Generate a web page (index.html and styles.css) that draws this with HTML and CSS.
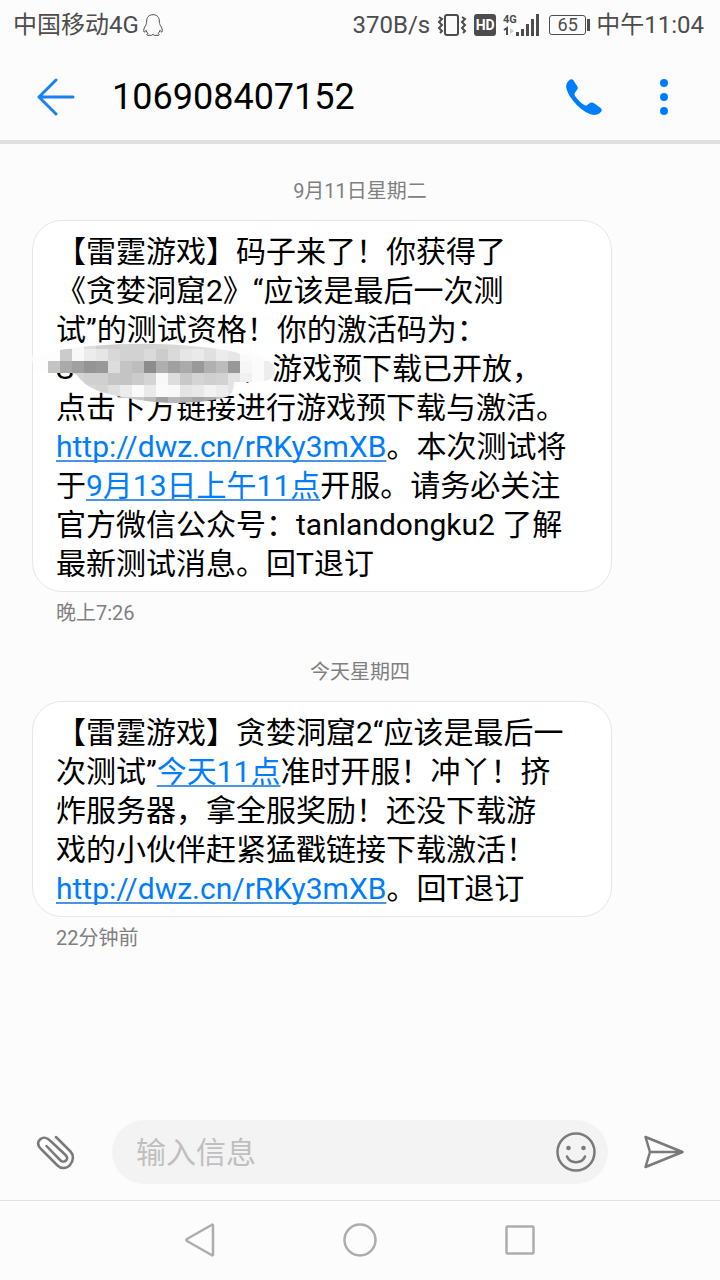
FILE: index.html
```html
<!DOCTYPE html>
<html lang="zh-CN">
<head>
    <meta charset="UTF-8">
    <meta name="viewport" content="width=device-width, initial-scale=1.0">
    <title>106908407152</title>
    <link rel="stylesheet" href="styles.css">
</head>
<body>
    <!-- Status bar -->
    <div class="status-bar">
        <span>中国移动4G</span>
        <svg class="qq" width="20" height="22" viewBox="0 0 60 66" fill="none" stroke="#4d4d4d" stroke-width="3">
            <path d="M30 2C17 2 11 11 11 21C11 27 10 30 8 34C3 41 1 49 3 54C5 55 8 51 9 49C10 53 12 56 15 58C11 60 10 64 14 64H26L30 61L34 64H46C50 64 49 60 45 58C48 56 50 53 51 49C52 51 55 55 57 54C59 49 57 41 52 34C50 30 49 27 49 21C49 11 43 2 30 2Z"/>
        </svg>
        <span class="speed">370B/s</span>
        <svg class="vibrate" width="30" height="24" viewBox="0 0 30 24" fill="none" stroke="#4d4d4d" stroke-width="2">
            <rect x="8" y="2" width="13" height="20" rx="2"/>
            <path d="M2 4L5 6L2 9L5 12L2 15L5 18L3 20M25 4L28 6L25 9L28 12L25 15L28 18L26 20"/>
        </svg>
        <span class="hd">HD</span>
        <svg class="signal" width="36" height="24" viewBox="0 0 36 24">
            <text x="0" y="10" font-size="11" font-weight="700" fill="#4d4d4d">4G</text>
            <path d="M1 17L4 15V22" fill="none" stroke="#4d4d4d" stroke-width="2"/>
            <path d="M7 15L11 18L7 21Z" fill="#ccc"/>
            <path d="M13 19h3v4h-3zM18 16h3v7h-3zM23 11h3v12h-3zM28 6h3v17h-3zM33 1h3v22h-3z" fill="#4d4d4d"/>
        </svg>
        <span class="battery">65</span>
        <span>中午11:04</span>
    </div>

    <!-- Conversation header -->
    <header class="header">
        <button class="icon-button" type="button" aria-label="返回">
            <svg width="38" height="38" viewBox="0 0 38 38" fill="none" stroke="#1a80f5" stroke-width="3" stroke-linecap="round" stroke-linejoin="round">
                <path d="M19 2L2 19L19 36M2 19H36"/>
            </svg>
        </button>
        <h1 class="number">106908407152</h1>
        <button class="icon-button" type="button" aria-label="拨打电话">
            <svg width="36" height="36" viewBox="0 0 109 109" fill="#007dff">
                <path d="M8 5Q16 -2 22 3L34 22Q38 28 33 33L27 42Q24 47 28 52Q42 72 58 80Q62 82 66 77L74 72Q80 70 86 74L105 88Q111 93 106 99Q98 109 84 109Q60 106 32 78Q2 46 0 22Q0 12 8 5Z"/>
            </svg>
        </button>
        <button class="icon-button more" type="button" aria-label="更多">
            <svg width="8" height="36" viewBox="0 0 8 36" fill="#007dff">
                <circle cx="4" cy="4" r="4"/>
                <circle cx="4" cy="18" r="4"/>
                <circle cx="4" cy="32" r="4"/>
            </svg>
        </button>
    </header>

    <!-- Messages -->
    <main class="messages">
        <p class="date">9月11日星期二</p>
        <div class="bubble">
            【雷霆游戏】码子来了！你获得了<br>
            《贪婪洞窟2》“应该是最后一次测<br>
            试”的测试资格！你的激活码为：<br>
            <span class="code">S<svg class="mosaic" width="244" height="60" viewBox="32 342 244 60">
                <defs>
                    <clipPath id="brush">
                        <path d="M48 360H60V349Q76 346 90 345Q150 340 200 346Q232 349 240 353L262 356Q274 362 275 368Q275 377 268 379Q262 381 252 381H234Q234 391 229 395Q210 402 170 402Q130 400 98 390Q82 383 77 374L72 372H48Z"/>
                    </clipPath>
                </defs>
                <path d="M32 356Q60 347 96 345H240L274 360L275 376L232 384L90 380L72 372L34 370Z" fill="#fdfdfd"/>
                <g id="cells" clip-path="url(#brush)"></g>
            </svg></span>，游戏预下载已开放，<br>
            点击下方链接进行游戏预下载与激活。<br>
            <a href="#">http://dwz.cn/rRKy3mXB</a>。本次测试将<br>
            于<a href="#">9月13日上午11点</a>开服。请务必关注<br>
            官方微信公众号：tanlandongku2 了解<br>
            最新测试消息。回T退订
        </div>
        <p class="time">晚上7:26</p>

        <p class="date">今天星期四</p>
        <div class="bubble">
            【雷霆游戏】贪婪洞窟2“应该是最后一<br>
            次测试”<a href="#">今天11点</a>准时开服！冲丫！挤<br>
            炸服务器，拿全服奖励！还没下载游<br>
            戏的小伙伴赶紧猛戳链接下载激活！<br>
            <a href="#">http://dwz.cn/rRKy3mXB</a>。回T退订
        </div>
        <p class="time">22分钟前</p>
    </main>

    <!-- Message input -->
    <form class="composer">
        <button class="icon-button" type="button" aria-label="附件">
            <svg width="40" height="36" viewBox="0 0 40 36" fill="none" stroke="#7a7a7a" stroke-width="2.5" stroke-linecap="round">
                <path d="M20 3L34.5 17.5C38 21 37.5 27 34 31S25 35 21.5 31.5L5 15C1.5 11.5 1.5 8 4 5.5S10.5 3 14 6.5L29.5 21C31.5 23 31.5 25 30 26.5S26 28 24 26L10.5 12"/>
            </svg>
        </button>
        <div class="field">
            <input class="field-input" type="text" placeholder="输入信息" aria-label="输入信息">
            <button class="icon-button" type="button" aria-label="表情">
                <svg width="40" height="40" viewBox="0 0 40 40" fill="none" stroke="#7a7a7a" stroke-width="2.5" stroke-linecap="round">
                    <circle cx="20" cy="20" r="18.5"/>
                    <path d="M11 24.5C14 32 26 32 29 24.5"/>
                    <circle cx="12.5" cy="16" r="2.3" fill="#7a7a7a" stroke="none"/>
                    <circle cx="27.5" cy="16" r="2.3" fill="#7a7a7a" stroke="none"/>
                </svg>
            </button>
        </div>
        <button class="icon-button" type="button" aria-label="发送">
            <svg width="40" height="34" viewBox="0 0 40 34" fill="none" stroke="#7a7a7a" stroke-width="2.5" stroke-linejoin="round">
                <path d="M1.5 2L38.5 17L1.5 32L6 17ZM6 17H38"/>
            </svg>
        </button>
    </form>

    <!-- System navigation -->
    <nav class="nav-bar">
        <button class="nav-button" type="button" aria-label="返回键">
            <svg width="32" height="34" viewBox="0 0 32 34"><path d="M29 2.5V31.5Q29 33 27.5 32L3 18Q1.5 17 3 16L27.5 2Q29 1 29 2.5Z"/></svg>
        </button>
        <button class="nav-button" type="button" aria-label="主屏幕">
            <svg width="34" height="34" viewBox="0 0 34 34"><circle cx="17" cy="17" r="15.5"/></svg>
        </button>
        <button class="nav-button" type="button" aria-label="最近任务">
            <svg width="30" height="30" viewBox="0 0 30 30"><rect x="1.5" y="1.5" width="27" height="27" rx="1"/></svg>
        </button>
    </nav>

    <script src="mosaic.js"></script>
</body>
</html>
```
FILE: styles.css
```css
* {
    box-sizing: border-box;
}
body {
    display: flex;
    flex-direction: column;
    min-height: 100vh;
    margin: 0;
    background-color: #fcfcfc;
    color: #000;
    font-family: Roboto, "Noto Sans CJK SC", sans-serif;
}
button {
    padding: 0;
    border: none;
    background: none;
    cursor: pointer;
}
svg {
    display: block;
}

/* Status bar */
.status-bar {
    display: flex;
    align-items: center;
    height: 50px;
    padding: 0 16px 0 13px;
    color: #4d4d4d;
    font-size: 24px;
    line-height: 36px;
    white-space: nowrap;
}
.qq {
    margin-left: 4px;
}
.speed {
    margin-left: auto;
}
.vibrate {
    margin-left: 7px;
}
.hd {
    width: 22px;
    margin-left: 7px;
    border-radius: 3px;
    background-color: #4d4d4d;
    color: #fff;
    font-size: 14px;
    font-weight: 700;
    line-height: 22px;
    text-align: center;
}
.signal {
    margin-left: 7px;
}
.battery {
    position: relative;
    width: 37px;
    margin: 0 10px;
    border: 1px solid #4d4d4d;
    border-radius: 3px;
    font-size: 18px;
    line-height: 18px;
    text-align: center;
}
.battery::after {
    content: "";
    position: absolute;
    top: 3px;
    right: -5px;
    width: 3px;
    height: 12px;
    background-color: #4d4d4d;
}

/* Header */
.header {
    display: flex;
    align-items: center;
    height: 94px;
    padding: 3px 52px 0 37px;
    border-bottom: 4px solid #e0e0e0;
}
.number {
    flex: 1;
    margin: 0 0 0 37px;
    font-size: 36px;
    font-weight: 400;
    line-height: 48px;
}
.more {
    margin-left: 58px;
}

/* Messages */
.messages {
    flex: 1;
    padding: 32px;
}
.date,
.time {
    margin: 0;
    color: #808080;
    font-size: 20px;
    line-height: 30px;
}
.date {
    text-align: center;
}
.bubble {
    max-width: 580px;
    margin-top: 14px;
    padding: 11px 20px 8px 23px;
    border: 1px solid #e6e6e6;
    border-radius: 30px;
    background-color: #fff;
    font-size: 30px;
    line-height: 39px;
}
.bubble a {
    color: #007dff;
    text-decoration: underline #4d94e0 2px;
    text-decoration-skip-ink: none;
    text-underline-offset: 3px;
}
.time {
    margin: 6px 24px 29px;
}
.code {
    display: inline-block;
    position: relative;
    width: 186px;
}
.mosaic {
    position: absolute;
    top: -6px;
    left: -24px;
}

/* Composer */
.composer {
    display: flex;
    align-items: center;
    padding: 16px 36px;
    border-bottom: 1px solid #e0e0e0;
}
.field {
    display: flex;
    flex: 1;
    align-items: center;
    min-width: 0;
    height: 64px;
    margin: 0 36px;
    padding: 0 12px 0 24px;
    border-radius: 32px;
    background-color: #f3f3f3;
}
.field-input {
    flex: 1;
    min-width: 0;
    padding: 2px 0 0;
    border: none;
    outline: none;
    background: none;
    font-family: inherit;
    font-size: 30px;
    line-height: 40px;
}
.field-input::placeholder {
    color: #bfbfbf;
}

/* Navigation */
.nav-bar {
    display: flex;
    justify-content: center;
    height: 79px;
    padding-bottom: 2px;
}
.nav-button {
    display: flex;
    align-items: center;
    justify-content: center;
    width: 160px;
}
.nav-button svg {
    fill: none;
    stroke: #adadad;
    stroke-width: 2.5px;
}
```
FILE: mosaic.js
```js
// Grey levels of the mosaic over the activation code, one row of 12px cells each
const rows = [
    { y: 336, x: 60, cells: "f0 f8 dd d0 cf d2 d2 d2 d4 d8 dd dd dd e4 ee" },
    { y: 348, x: 60, cells: "cb f8 ec e6 d8 d2 d2 da cc da e6 ea e0 ec e6 fa fc" },
    { y: 360, x: 48, cells: "c4 aa a0 94 98 dc c4 bd 8c ae a0 aa 99 b0 bc 98 f6 fb ed" },
    { y: 372, x: 72, cells: "d4 d0 d0 c6 c4 cb d4 f8 dd c8 d4 cf d2 e3 f0 fb ed" },
    { y: 384, x: 72, cells: "d6 d6 d4 e0 ec fa ea fa f8 e4 e8 f2 ec e4" },
    { y: 396, x: 72, cells: "c4 c4 c8 cc d0 c8 bc a2 b8 b0 a6 ac c0 c8" }
];

const group = document.getElementById("cells");
for (const row of rows) {
    row.cells.split(" ").forEach((grey, i) => {
        const cell = document.createElementNS("http://www.w3.org/2000/svg", "rect");
        cell.setAttribute("x", row.x + i * 12);
        cell.setAttribute("y", row.y);
        cell.setAttribute("width", 12);
        cell.setAttribute("height", 12);
        cell.setAttribute("fill", `#${grey}${grey}${grey}`);
        group.appendChild(cell);
    });
}
```
